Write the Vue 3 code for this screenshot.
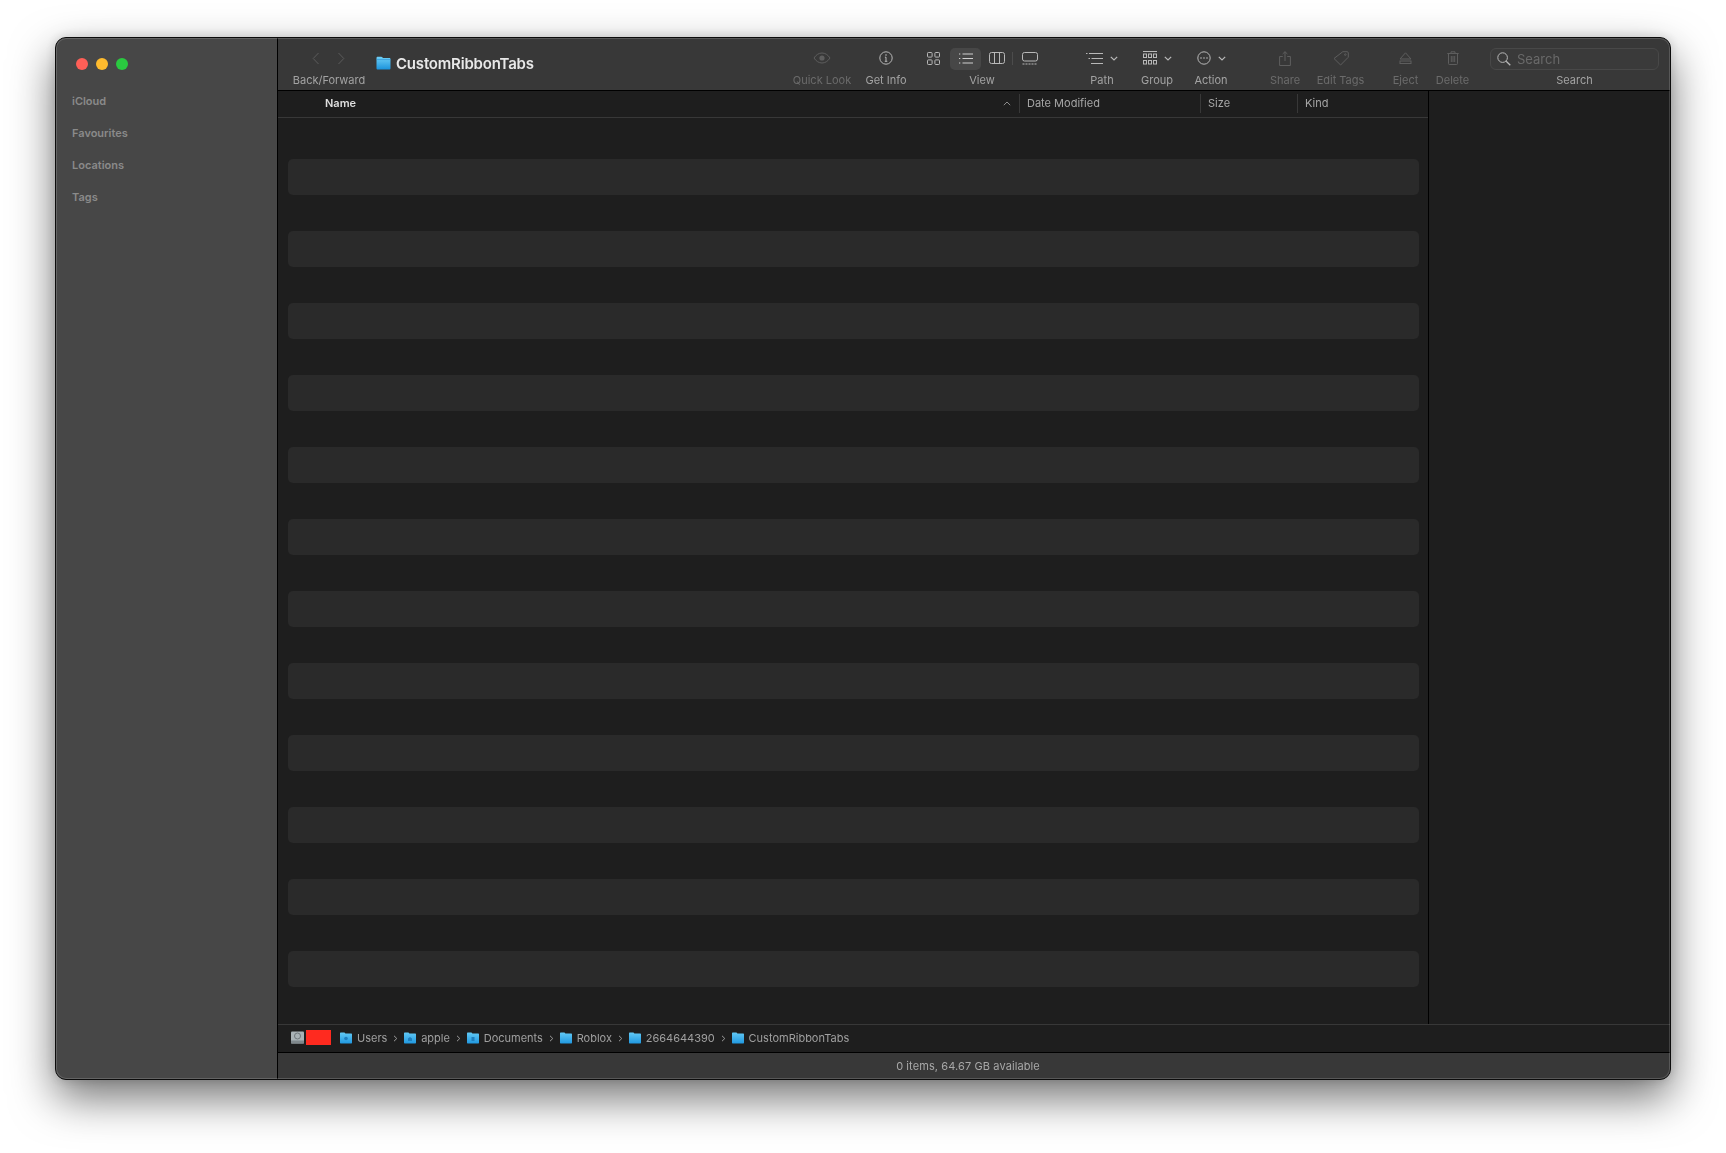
<script setup>
const rows = Array.from({ length: 12 }, (_, i) => i)
const sidebar = ['iCloud', 'Favourites', 'Locations', 'Tags']
const crumbs = [
  { name: 'Users', mark: 'user' },
  { name: 'apple', mark: 'home' },
  { name: 'Documents', mark: 'doc' },
  { name: 'Roblox' },
  { name: '2664644390' },
  { name: 'CustomRibbonTabs', last: true }
]
</script>

<template>
  <div class="desk">
  <div class="window">
    <aside class="sidebar">
      <div class="lights">
        <span class="light red"></span>
        <span class="light yellow"></span>
        <span class="light green"></span>
      </div>
      <nav class="sections">
        <div v-for="s in sidebar" :key="s" class="section">{{ s }}</div>
      </nav>
    </aside>

    <main class="main">
      <header class="toolbar">
        <div class="tool nav">
          <div class="slot nav-icons">
            <svg width="8" height="13" viewBox="0 0 8 13" class="ic off"><path d="M6.5 1 1.2 6.5 6.5 12" /></svg>
            <svg width="8" height="13" viewBox="0 0 8 13" class="ic off"><path d="M1.5 1 6.8 6.5 1.5 12" /></svg>
          </div>
          <span class="label">Back/Forward</span>
        </div>

        <div class="title">
          <svg width="15" height="14" viewBox="0 0 15 14">
            <defs>
              <linearGradient id="ft" x1="0" y1="0" x2="0" y2="1">
                <stop offset="0" stop-color="#6fd0f7" />
                <stop offset="1" stop-color="#1b93dc" />
              </linearGradient>
            </defs>
            <path d="M0.5 2.2C0.5 1.3 1 .8 1.9.8h3.3c.5 0 .8.2 1.1.5l.7.8h6.2c.9 0 1.3.5 1.3 1.3v8.8c0 .9-.4 1.3-1.3 1.3H1.8c-.9 0-1.3-.4-1.3-1.3z" fill="url(#ft)" />
            <path d="M0.5 3.6h14" stroke="#2a90d0" stroke-width=".6" fill="none" />
          </svg>
          <span>CustomRibbonTabs</span>
        </div>

        <div class="tool w-ql">
          <div class="slot">
            <svg width="18" height="12" viewBox="0 0 18 12" class="ic off">
              <path d="M1 6C3.2 2.7 5.8 1 9 1s5.8 1.7 8 5c-2.2 3.3-4.8 5-8 5S3.200 9.300 1 6z" />
              <circle cx="9" cy="6" r="2.6" fill="#5e5e5e" stroke="none" />
            </svg>
          </div>
          <span class="label dim">Quick Look</span>
        </div>

        <div class="tool w-info">
          <div class="slot">
            <svg width="14" height="14" viewBox="0 0 14 14" class="ic">
              <circle cx="7" cy="7" r="6.2" />
              <path d="M7 6.200v4M5.800 10.300h2.500M5.900 6.200H7" />
              <circle cx="7" cy="4" r=".8" fill="#b8b8b8" stroke="none" />
            </svg>
          </div>
          <span class="label">Get Info</span>
        </div>

        <div class="tool w-view">
          <div class="slot view-icons">
            <span class="view-btn">
              <svg width="13" height="13" viewBox="0 0 13 13" class="ic grid-ic">
                <rect x=".5" y=".5" width="4.600" height="4.600" rx=".8" />
                <rect x="7.900" y=".5" width="4.600" height="4.600" rx=".8" />
                <rect x=".5" y="7.900" width="4.600" height="4.600" rx=".8" />
                <rect x="7.900" y="7.900" width="4.600" height="4.600" rx=".8" />
              </svg>
            </span>
            <span class="view-btn active">
              <svg width="14" height="11" viewBox="0 0 14 11" class="ic bright">
                <path d="M3.500 1H14M3.500 5.500H14M3.500 10H14M0 1h1.300M0 5.500h1.300M0 10h1.300" stroke-width="1.200" />
              </svg>
            </span>
            <span class="view-btn">
              <svg width="16" height="12" viewBox="0 0 16 12" class="ic">
                <rect x=".5" y=".5" width="15" height="11" rx="2" />
                <path d="M5.500 .5v11M10.500 .5v11" />
              </svg>
            </span>
            <span class="view-sep"></span>
            <span class="view-btn">
              <svg width="16" height="13" viewBox="0 0 16 13" class="ic">
                <rect x=".5" y=".5" width="15" height="8.500" rx="2" />
                <path d="M.5 12h15" stroke-dasharray="2 1" />
              </svg>
            </span>
          </div>
          <span class="label">View</span>
        </div>

        <div class="tool w-path">
          <div class="slot drop">
            <svg width="17" height="11" viewBox="0 0 17 11" class="ic">
              <path d="M0 .5h1.500M3 .5h14M2.500 5.500h1.500M5.500 5.500H17M5 10.500h12" />
            </svg>
            <svg width="8" height="5" viewBox="0 0 8 5" class="ic chev"><path d="M.8.8 4 4 7.200.8" /></svg>
          </div>
          <span class="label">Path</span>
        </div>

        <div class="tool w-group">
          <div class="slot drop">
            <svg width="14" height="14" viewBox="0 0 14 14" class="ic">
              <path d="M0 .5h14" />
              <rect x=".5" y="3" width="3" height="3.500" />
              <rect x="5.500" y="3" width="3" height="3.500" />
              <rect x="10.500" y="3" width="3" height="3.500" />
              <rect x=".5" y="9.500" width="3" height="3.500" />
              <rect x="5.500" y="9.500" width="3" height="3.500" />
              <rect x="10.500" y="9.500" width="3" height="3.500" />
            </svg>
            <svg width="8" height="5" viewBox="0 0 8 5" class="ic chev"><path d="M.8.8 4 4 7.200.8" /></svg>
          </div>
          <span class="label">Group</span>
        </div>

        <div class="tool w-action">
          <div class="slot drop">
            <svg width="14" height="14" viewBox="0 0 14 14" class="ic">
              <circle cx="7" cy="7" r="6.200" />
              <circle cx="4" cy="7" r=".8" fill="#b8b8b8" stroke="none" />
              <circle cx="7" cy="7" r=".8" fill="#b8b8b8" stroke="none" />
              <circle cx="10" cy="7" r=".8" fill="#b8b8b8" stroke="none" />
            </svg>
            <svg width="8" height="5" viewBox="0 0 8 5" class="ic chev"><path d="M.8.8 4 4 7.200.8" /></svg>
          </div>
          <span class="label">Action</span>
        </div>

        <div class="tool w-share">
          <div class="slot">
            <svg width="12" height="15" viewBox="0 0 12 15" class="ic off">
              <path d="M3.800 5.500H.6v9h10.800v-9H8.200M6 10V.8M3.600 3 6 .7 8.400 3" />
            </svg>
          </div>
          <span class="label dim">Share</span>
        </div>

        <div class="tool w-tags">
          <div class="slot">
            <svg width="16" height="15" viewBox="0 0 16 15" class="ic off">
              <path d="M9.800.7h4.300c.7 0 1.200.5 1.200 1.200v4.300L7.600 14 1 7.500z" />
              <circle cx="12.300" cy="3.600" r=".8" />
            </svg>
          </div>
          <span class="label dim">Edit Tags</span>
        </div>

        <div class="tool w-eject">
          <div class="slot">
            <svg width="13" height="12" viewBox="0 0 13 12" class="ic off">
              <path d="M6.500.8 12 7H1z" />
              <rect x="1" y="9" width="11" height="2.500" />
            </svg>
          </div>
          <span class="label dim">Eject</span>
        </div>

        <div class="tool w-delete">
          <div class="slot">
            <svg width="12" height="14" viewBox="0 0 12 14" class="ic off">
              <path d="M.3 2.500h11.400M4 2.500V.8h4v1.700M1.500 2.500v10.200c0 .5.300.8.800.8h7.400c.5 0 .8-.3.800-.8V2.500M4.300 5v6M6 5v6M7.700 5v6" />
            </svg>
          </div>
          <span class="label dim">Delete</span>
        </div>

        <div class="tool w-search">
          <div class="search">
            <svg width="14" height="14" viewBox="0 0 14 14" class="ic">
              <circle cx="5.600" cy="5.600" r="4.800" />
              <path d="M9.200 9.200 13.300 13.300" stroke-width="1.300" />
            </svg>
            <span>Search</span>
          </div>
          <span class="label">Search</span>
        </div>
      </header>

      <section class="content">
        <div class="list">
          <div class="columns">
            <div class="col col-name">
              <span class="name">Name</span>
              <svg width="8" height="5" viewBox="0 0 8 5" class="ic caret"><path d="M.8 4.200 4 1l3.200 3.200" /></svg>
            </div>
            <div class="col col-date"><span>Date Modified</span></div>
            <div class="col col-size"><span>Size</span></div>
            <div class="col col-kind"><span>Kind</span></div>
          </div>
          <div class="rows">
            <div v-for="r in rows" :key="r" class="row"></div>
          </div>
        </div>
        <div class="preview"></div>
      </section>

      <div class="pathbar">
        <svg width="13" height="13" viewBox="0 0 13 13" class="disk">
          <rect x="0" y=".5" width="13" height="12" rx="1" fill="#a9b2b6" />
          <rect x="0" y="9.500" width="13" height="3" fill="#7f888c" />
          <circle cx="6.500" cy="5" r="3" fill="none" stroke="#6f777b" stroke-width="1" />
        </svg>
        <span class="redact"></span>
        <template v-for="(c, i) in crumbs" :key="c.name">
          <span class="crumb" :class="{ first: i === 0 }">
            <svg width="12" height="12" viewBox="0 0 12 12">
              <defs>
                <linearGradient :id="'f' + i" x1="0" y1="0" x2="0" y2="1">
                  <stop offset="0" stop-color="#62c9f5" />
                  <stop offset="1" stop-color="#2098e0" />
                </linearGradient>
              </defs>
              <path d="M0 1.500C0 .8.300.5 1 .5h3c.4 0 .7.100.9.400l.6.600H11c.7 0 1 .4 1 1v8c0 .7-.3 1-1 1H1c-.7 0-1-.3-1-1z" :fill="'url(#f' + i + ')'" />
              <circle v-if="c.mark === 'user'" cx="6" cy="6.500" r="1.800" fill="#1f7fbe" />
              <path v-if="c.mark === 'home'" d="M4 9V6.500L6 5l2 1.500V9z" fill="#1f7fbe" />
              <rect v-if="c.mark === 'doc'" x="4.500" y="5" width="3" height="4" fill="#1f7fbe" />
            </svg>
            <span class="crumb-text">{{ c.name }}</span>
            <svg v-if="!c.last" width="5" height="7" viewBox="0 0 5 7" class="ic sep"><path d="M1 .8 3.800 3.500 1 6.200" /></svg>
          </span>
        </template>
      </div>

      <footer class="status">0 items, 64.67 GB available</footer>
    </main>
  </div>
  </div>
</template>

<style scoped>
.desk {
  box-sizing: border-box;
  height: 1153px;
  padding: 37px 0 0 55px;
  background: #fff;
}
.window {
  box-sizing: border-box;
  width: 1616px;
  height: 1043px;
  display: flex;
  border: 1px solid #0c0c0c;
  border-radius: 11px;
  overflow: hidden;
  background: #383838;
  font-family: Inter, "Liberation Sans", sans-serif;
  box-shadow: 0 18px 44px rgba(0, 0, 0, 0.55), 0 0 12px rgba(0, 0, 0, 0.15);
  position: relative;
  filter: blur(0.3px);
}
.window::after {
  content: "";
  position: absolute;
  inset: 0;
  border-radius: 10px;
  box-shadow: inset 0 0 0 1px rgba(255, 255, 255, 0.16);
  pointer-events: none;
}
.sidebar {
  width: 221px;
  flex: none;
  background: #474747;
  border-right: 1px solid #000;
}
.lights {
  display: flex;
  gap: 8px;
  padding: 20px 0 0 20px;
}
.light {
  width: 12px;
  height: 12px;
  border-radius: 50%;
}
.red { background: #fe5f57; }
.yellow { background: #febb2e; }
.green { background: #2ac940; }
.sections {
  display: flex;
  flex-direction: column;
  padding: 24px 0 0 16px;
  gap: 18px;
}
.section {
  font-size: 11px;
  line-height: 14px;
  font-weight: 600;
  color: #8a8a8a;
}
.main {
  flex: 1;
  min-width: 0;
  display: flex;
  flex-direction: column;
}
.toolbar {
  box-sizing: border-box;
  height: 53px;
  flex: none;
  display: flex;
  padding: 10px 11px 0 14px;
  background: #383838;
  border-bottom: 1px solid #000;
}
.tool {
  display: flex;
  flex-direction: column;
  align-items: center;
  flex: none;
}
.slot {
  height: 22px;
  display: flex;
  align-items: center;
  justify-content: center;
  padding-bottom: 2px;
  box-sizing: border-box;
}
.label {
  margin-top: 4px;
  font-size: 11px;
  line-height: 13px;
  color: #a3a3a3;
  white-space: nowrap;
}
.label.dim { color: #6b6b6b; }
.ic {
  fill: none;
  stroke: #b8b8b8;
  stroke-width: 1;
  flex: none;
}
.ic.off { stroke: #5e5e5e; }
.ic.bright { stroke: #d0d0d0; }
.nav { width: 74px; }
.nav-icons { gap: 17px; margin-right: 2px; }
.nav-icons .ic { stroke: #5c5c5c; }
.title {
  flex: 1;
  display: flex;
  align-items: center;
  gap: 5px;
  height: 30px;
  margin-left: 10px;
  color: #e8e8e8;
  font-size: 15px;
  font-weight: 600;
  letter-spacing: -0.2px;
}
.w-ql { width: 60px; }
.w-info { width: 56px; margin-left: 6px; }
.w-view { width: 120px; margin-left: 8px; }
.view-icons { padding: 0; width: 126px; margin-left: -3px; justify-content: flex-start; align-self: flex-start; }
.view-btn {
  width: 31px;
  height: 22px;
  display: flex;
  align-items: center;
  justify-content: center;
  padding-bottom: 2px;
  box-sizing: border-box;
  flex: none;
}
.view-btn.active {
  background: #474747;
  border-radius: 5px;
}
.grid-ic { margin-right: 2px; }
.view-sep {
  width: 1px;
  height: 13px;
  background: #4c4c4c;
  flex: none;
  margin: 0 1px 2px 0;
}
.w-path { width: 56px; margin-left: 32px; }
.w-group { width: 54px; }
.w-action { width: 54px; }
.drop { gap: 7px; }
.chev { stroke-width: 1.2; }
.w-share { width: 46px; margin-left: 24px; }
.w-tags { width: 65px; }
.w-eject { width: 47px; margin-left: 9px; }
.w-delete { width: 47px; }
.w-search { width: 169px; margin-left: 14px; }
.search {
  box-sizing: border-box;
  width: 100%;
  height: 22px;
  display: flex;
  align-items: center;
  gap: 6px;
  padding-left: 6px;
  border: 1px solid #484848;
  border-radius: 6px;
  background: #3a3a3a;
  color: #696969;
  font-size: 13px;
}
.content {
  flex: 1;
  min-height: 0;
  display: flex;
  background: #1e1e1e;
}
.list {
  width: 1150px;
  flex: none;
  border-right: 1px solid #000;
}
.preview { flex: 1; }
.columns {
  box-sizing: border-box;
  height: 27px;
  display: flex;
  align-items: center;
  padding-bottom: 2px;
  border-bottom: 1px solid #383838;
  font-size: 11px;
  color: #a6a6a6;
}
.col {
  box-sizing: border-box;
  height: 19px;
  display: flex;
  align-items: center;
  flex: none;
}
.col-name {
  width: 741px;
  padding: 0 8px 0 47px;
  justify-content: space-between;
}
.name {
  font-weight: 600;
  color: #dedede;
}
.caret { stroke: #8c8c8c; }
.col-date, .col-size, .col-kind {
  padding-left: 7px;
  border-left: 1px solid #383838;
}
.col-date { width: 181px; }
.col-size { width: 97px; }
.col-kind { width: 131px; }
.rows {
  display: flex;
  flex-direction: column;
  gap: 36px;
  padding: 41px 9px 0 10px;
}
.row {
  height: 36px;
  border-radius: 5px;
  background: #2a2a2a;
}
.pathbar {
  box-sizing: border-box;
  height: 29px;
  flex: none;
  display: flex;
  align-items: center;
  padding: 0 0 0 13px;
  background: #1e1e1e;
  border-top: 1px solid #383838;
  border-bottom: 1px solid #000;
  font-size: 11px;
  color: #a0a0a0;
}
.disk { flex: none; margin-bottom: 2px; }
.redact {
  width: 25px;
  height: 15px;
  margin: 0 0 2px 2px;
  background: #ff2a1f;
  flex: none;
}
.crumb {
  display: flex;
  align-items: center;
  margin-left: 5.8px;
  margin-bottom: 1px;
}
.crumb.first { margin-left: 9px; }
.crumb-text { margin-left: 5px; white-space: nowrap; }
.sep { margin-left: 6px; stroke: #9a9a9a; }
.status {
  flex: none;
  height: 26px;
  display: flex;
  align-items: center;
  justify-content: center;
  padding-right: 12px;
  background: #383838;
  font-size: 11px;
  letter-spacing: 0.1px;
  color: #a8a8a8;
}
</style>
